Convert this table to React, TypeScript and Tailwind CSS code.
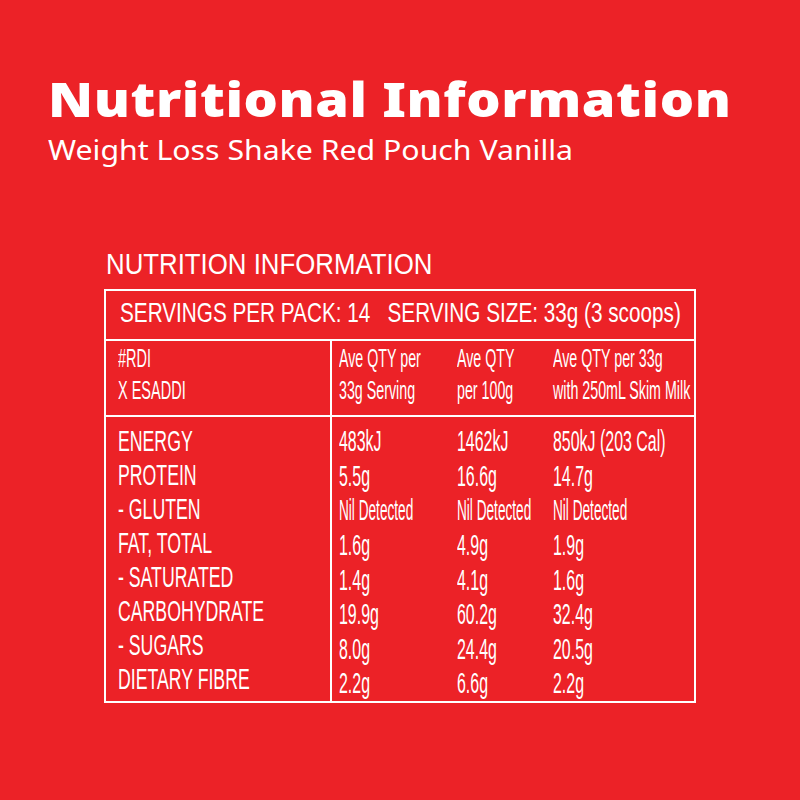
const rows = [
  ['ENERGY', '483kJ', '1462kJ', '850kJ (203 Cal)'],
  ['PROTEIN', '5.5g', '16.6g', '14.7g'],
  ['- GLUTEN', 'Nil Detected', 'Nil Detected', 'Nil Detected'],
  ['FAT, TOTAL', '1.6g', '4.9g', '1.9g'],
  ['- SATURATED', '1.4g', '4.1g', '1.6g'],
  ['CARBOHYDRATE', '19.9g', '60.2g', '32.4g'],
  ['- SUGARS', '8.0g', '24.4g', '20.5g'],
  ['DIETARY FIBRE', '2.2g', '6.6g', '2.2g'],
]

// condensed look: Liberation Sans squeezed horizontally
const Cnd = ({ text, className }: { text: string; className: string }) => (
  <span className={`inline-block origin-left whitespace-nowrap ${className}`}>{text}</span>
)

const Value = ({ text }: { text: string }) =>
  text === 'Nil Detected' ? (
    <Cnd text={text} className="scale-x-[0.47]" />
  ) : (
    <Cnd text={text} className="scale-x-[0.55]" />
  )

export default function App() {
  return (
    <div className="w-[800px] h-[800px] bg-[#ec2227] text-white overflow-hidden">
      <div className="pt-[71px] pl-[48px]">
        <h1 className="font-['Noto_Sans',sans-serif] font-black text-[47px] leading-[56px]">
          <Cnd text="Nutritional Information" className="scale-x-[1.15] tracking-[0.5px]" />
        </h1>
        <p className="mt-[5px] font-['Noto_Sans',sans-serif] font-normal text-[28px] leading-[34px]">
          <Cnd text="Weight Loss Shake Red Pouch Vanilla" className="scale-x-[1.08]" />
        </p>
      </div>

      <div className="ml-[104px] mt-[81px] font-['Liberation_Sans',Arial,sans-serif]">
        <div className="pl-[2px] mb-[8px] text-[29px] leading-[34px]">
          <Cnd text="NUTRITION INFORMATION" className="scale-x-[0.89]" />
        </div>

        <div className="w-[592px] border-2 border-white">
          <div className="h-[50px] border-b-2 border-white pl-[14px] text-[28px] leading-[44px]">
            <Cnd
              text="SERVINGS PER PACK: 14   SERVING SIZE: 33g (3 scoops)"
              className="scale-x-[0.74] whitespace-pre"
            />
          </div>

          <div className="flex h-[76px] border-b-2 border-white text-[25px] leading-[32px]">
            <div className="w-[226px] shrink-0 border-r-2 border-white pl-[12px] pt-px flex flex-col">
              <Cnd text="#RDI" className="scale-x-[0.58]" />
              <Cnd text="X ESADDI" className="scale-x-[0.58]" />
            </div>
            <div className="flex-1 min-w-0 grid grid-cols-[118px_96px_1fr] pl-[7px] pt-px">
              <div className="flex flex-col">
                <Cnd text="Ave QTY per" className="scale-x-[0.57]" />
                <Cnd text="33g Serving" className="scale-x-[0.57]" />
              </div>
              <div className="flex flex-col">
                <Cnd text="Ave QTY" className="scale-x-[0.57]" />
                <Cnd text="per 100g" className="scale-x-[0.57]" />
              </div>
              <div className="flex flex-col">
                <Cnd text="Ave QTY per 33g" className="scale-x-[0.57]" />
                <Cnd text="with 250mL Skim Milk" className="scale-x-[0.57]" />
              </div>
            </div>
          </div>

          <div className="flex h-[284px] text-[29px] leading-[34px]">
            <div className="w-[226px] shrink-0 border-r-2 border-white pl-[12px] pt-[7px] flex flex-col">
              {rows.map(([label]) => (
                <Cnd key={label} text={label} className="scale-x-[0.61]" />
              ))}
            </div>
            <div className="flex-1 min-w-0 grid grid-cols-[118px_96px_1fr] pl-[7px] pt-[7px]">
              {rows.map(([label, a, b, c]) => (
                <div key={label} className="contents">
                  <Value text={a} />
                  <Value text={b} />
                  <Value text={c} />
                </div>
              ))}
            </div>
          </div>
        </div>
      </div>
    </div>
  )
}
